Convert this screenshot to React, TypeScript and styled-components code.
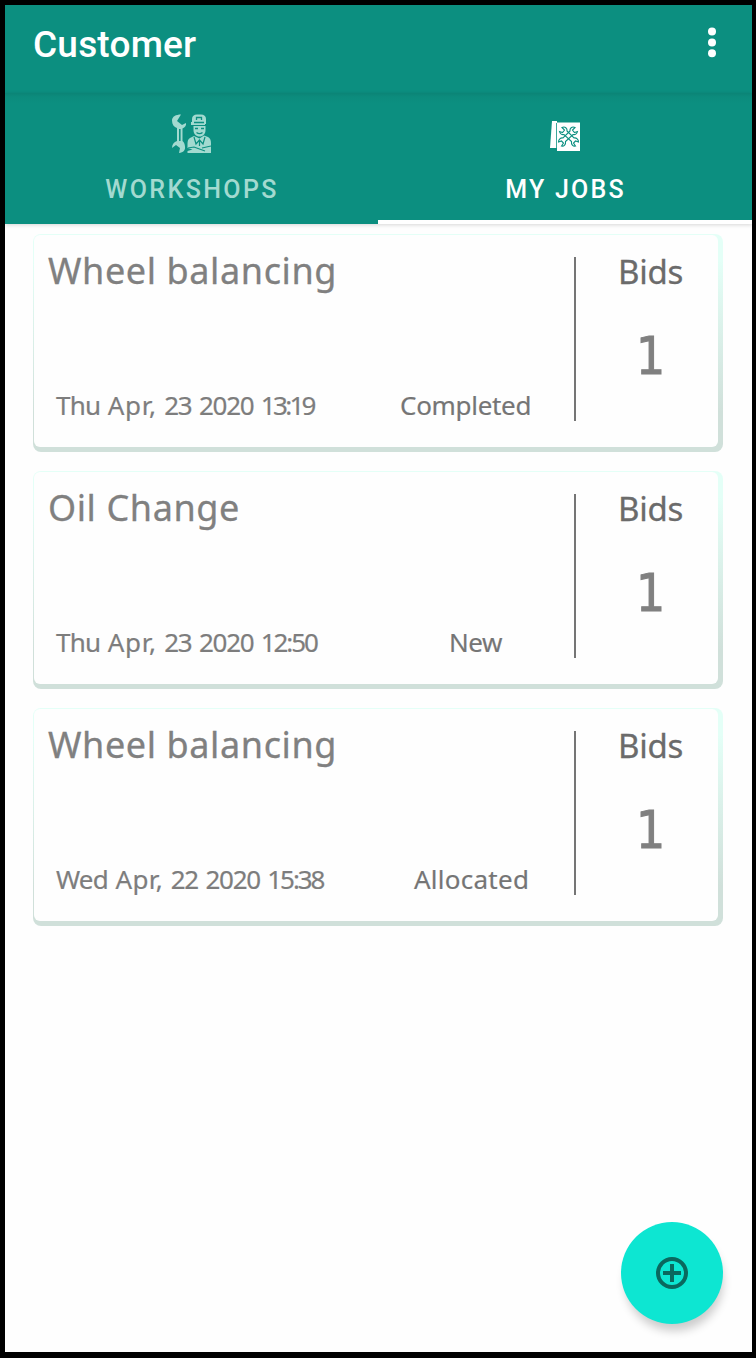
import React from "react";
import styled, { createGlobalStyle } from "styled-components";

const GlobalStyle = createGlobalStyle`
  *, *::before, *::after { box-sizing: border-box; }
  body { margin: 0; background: #000; }
`;

const Screen = styled.div`
  position: relative;
  display: flex;
  flex-direction: column;
  width: 756px;
  height: 1358px;
  border: solid #000;
  border-width: 5px 4px 6px 5px;
  background: #fefefe;
  font-family: "Noto Sans", sans-serif;
  overflow: hidden;
`;

const AppBar = styled.header`
  display: flex;
  flex: none;
  align-items: center;
  justify-content: space-between;
  height: 88px;
  padding: 0 34px 13px 28px;
  background: #0c8f80;
`;

const Title = styled.h1`
  margin: 4px 0 0;
  font: 500 37px/44px Roboto, sans-serif;
  letter-spacing: 0.2px;
  color: #fff;
`;

const MenuButton = styled.button`
  display: flex;
  padding: 0;
  border: 0;
  background: none;
`;

const Tabs = styled.nav`
  display: grid;
  grid-template-columns: 373px 374px;
  flex: none;
  height: 131px;
  background: linear-gradient(#0b8476, #0c8c7d 4px, #0c8f80 11px);
  box-shadow: 0 1px 4px rgba(0, 0, 0, 0.16);
`;

const Tab = styled.div<{ $active?: boolean }>`
  display: flex;
  flex-direction: column;
  align-items: center;
  padding-top: 19px;
  border-bottom: 4px solid ${(p) => (p.$active ? "#fff" : "transparent")};
  color: ${(p) => (p.$active ? "#fff" : "#a3dad0")};
`;

const TabLabel = styled.span<{ $spacing: number }>`
  margin-top: 21px;
  font: 500 25px/30px Roboto, sans-serif;
  letter-spacing: ${(p) => p.$spacing}px;
  margin-right: -${(p) => p.$spacing / 2}px;
`;

const JobList = styled.main`
  display: flex;
  flex-direction: column;
  gap: 19px;
  padding: 10px 29px 0 28px;
`;

const Card = styled.article`
  height: 218px;
  padding: 1px 5px 5px 1px;
  border-radius: 8px;
  background: linear-gradient(#e4fff7 12%, #d0e0da 82%);
`;

const CardFace = styled.div`
  display: flex;
  height: 100%;
  padding-top: 22px;
  border-radius: 6px;
  background: #fefefe;
`;

const JobInfo = styled.div`
  display: flex;
  flex-direction: column;
  justify-content: space-between;
  width: 540px;
  height: 164px;
`;

const JobName = styled.h2<{ $spacing: number }>`
  margin: -10px 0 0 14px;
  font-size: 36px;
  line-height: 48px;
  font-weight: 400;
  letter-spacing: ${(p) => p.$spacing}px;
  -webkit-text-stroke: 0.3px #808080;
  color: #808080;
`;

const JobMeta = styled.div`
  display: grid;
  grid-template-columns: 318px 200px;
  align-items: center;
  height: 32px;
  padding-left: 22px;
  font-size: 26px;
  line-height: 32px;
  -webkit-text-stroke: 0.2px #7d7d7d;
  color: #7d7d7d;
`;

const DateLine = styled.time`
  display: flex;
  gap: 7.5px;
  white-space: nowrap;
`;

const DatePart = styled.span<{ $spacing: number }>`
  letter-spacing: ${(p) => p.$spacing}px;
`;

const Status = styled.span<{ $shift: number; $spacing: number }>`
  padding-left: ${(p) => p.$shift}px;
  letter-spacing: ${(p) => p.$spacing}px;
  color: #757575;
`;

const Divider = styled.div`
  width: 2px;
  height: 164px;
  background: #757575;
`;

const Bids = styled.div`
  display: flex;
  flex-direction: column;
  align-items: center;
  width: 142px;
  padding-left: 7px;
`;

const BidsLabel = styled.span`
  margin-top: -6px;
  font-size: 33px;
  line-height: 42px;
  letter-spacing: -0.3px;
  -webkit-text-stroke: 0.3px #6b6b6b;
  color: #6b6b6b;
`;

const BidCount = styled.span`
  margin-top: 34px;
  font: 51px/60px "DejaVu Sans Condensed", "DejaVu Sans", sans-serif;
  -webkit-text-stroke: 1px #808080;
  color: #808080;
`;

const AddButton = styled.button`
  position: absolute;
  right: 29px;
  bottom: 28px;
  display: grid;
  place-items: center;
  width: 102px;
  height: 102px;
  padding: 0;
  border: 0;
  border-radius: 50%;
  background: #0de6d2;
  box-shadow: 2px 9px 10px -2px rgba(0, 0, 0, 0.2);
`;

const MechanicIcon = () => (
  <svg width="42" height="42" viewBox="0 0 42 42" fill="currentColor">
    <path d="M10 2.500C5 2.500 1 4.500 1 8.500s2 6.500 5 7.500V29C3 30 1 32.500 1 36l4-3 4 3-1 5c4.500-.5 6.500-3 6-6.500-.2-2.500-1-4.500-2.500-5.500V16.500c2.500-1 4-3 3.500-5.500l-4 2-5-4z" />
    <path d="M8.800 17v12" stroke="#0c8f80" strokeWidth="1.600" />
    <path d="M21 10V7c0-3 2-4.500 5-4.500h4c3 0 5 1.500 5 4.500v5h-1v1H20v-3z" />
    <path d="M25.500 8V5.500h5V8M23 10.500h10" fill="none" stroke="#0c8f80" strokeWidth="1.300" />
    <path d="M22.500 14h12v4c0 4-2.500 6.500-6 6.500s-6-2.500-6-6.500z" />
    <path d="M24 16.500h3M30 16.500h3M25.500 20.500c2 1.500 4 1.500 6 0" fill="none" stroke="#0c8f80" strokeWidth="1.400" />
    <path d="M23 24l-4 2c-2 1-2.500 3-2.500 6v4l5 1.500-5 1.500v2H40v-10c0-3-1-5-3-6l-4-1.500-4.500 3z" />
    <path d="M23 25l2 7 3.500-4 3.500 4 2-7M28.500 28v6M17 36l6-1 11 4M31 36l9-2" fill="none" stroke="#0c8f80" strokeWidth="1.200" />
  </svg>
);

const JobsIcon = () => (
  <svg width="42" height="42" viewBox="0 1 42 42" fill="currentColor">
    <path d="M8 10h5v27H6z" />
    <path d="M13 11.500h23V40H13z" />
    <path d="M12.500 12v25" stroke="#0c8f80" strokeWidth=".8" />
    <g fill="none" stroke="#0c8f80" strokeWidth="1.100">
      <path d="M18 16.500l2.500 2.500-2 2.500-3-1c.5 2.500 2.500 3.500 4.500 3l7.500 7c-.5 3 1.500 5 4 4.500l-2-3 2-2 3 1c0-2.500-2-4.500-4.500-4l-7-7c.500-2.500-2-5-5-3.500z" />
      <path d="M31 16.500L28.500 19l2 2.500 3-1c-.5 2.500-2.500 3.500-4.500 3l-7.500 7c.500 3-1.500 5-4 4.500l2-3-2-2-3 1c0-2.500 2-4.500 4.500-4l7-7c-.5-2.500 2-5 5-3.500z" />
    </g>
  </svg>
);

type Job = {
  name: string;
  nameSpacing: number;
  date: [string, number][];
  status: string;
  statusShift: number;
  statusSpacing: number;
};

const jobs: Job[] = [
  {
    name: "Wheel balancing",
    nameSpacing: 0.6,
    date: [["Thu", -0.8], ["Apr,", 0.7], ["23", -1.2], ["2020", -1.3], ["13:19", -2.7]],
    status: "Completed",
    statusShift: 26,
    statusSpacing: -0.3,
  },
  {
    name: "Oil Change",
    nameSpacing: 0.6,
    date: [["Thu", -0.8], ["Apr,", 0.7], ["23", -1.2], ["2020", -1.3], ["12:50", -2.1]],
    status: "New",
    statusShift: 75,
    statusSpacing: -0.5,
  },
  {
    name: "Wheel balancing",
    nameSpacing: 0.6,
    date: [["Wed", -0.8], ["Apr,", 0.4], ["22", -1.2], ["2020", -1.3], ["15:38", -2.1]],
    status: "Allocated",
    statusShift: 40,
    statusSpacing: 0.25,
  },
];

export default function App() {
  return (
    <Screen>
      <GlobalStyle />
      <AppBar>
        <Title>Customer</Title>
        <MenuButton aria-label="More options">
          <svg width="12" height="32" viewBox="0 0 12 32" fill="#fff">
            <circle cx="6" cy="4.500" r="4" />
            <circle cx="6" cy="15.400" r="4" />
            <circle cx="6" cy="26.300" r="4" />
          </svg>
        </MenuButton>
      </AppBar>
      <Tabs>
        <Tab>
          <MechanicIcon />
          <TabLabel $spacing={2.4}>WORKSHOPS</TabLabel>
        </Tab>
        <Tab $active>
          <JobsIcon />
          <TabLabel $spacing={2.2}>MY JOBS</TabLabel>
        </Tab>
      </Tabs>
      <JobList>
        {jobs.map((job, i) => (
          <Card key={i}>
            <CardFace>
              <JobInfo>
                <JobName $spacing={job.nameSpacing}>{job.name}</JobName>
                <JobMeta>
                  <DateLine>
                    {job.date.map(([text, spacing], k) => (
                      <DatePart key={k} $spacing={spacing}>{text}</DatePart>
                    ))}
                  </DateLine>
                  <Status $shift={job.statusShift} $spacing={job.statusSpacing}>
                    {job.status}
                  </Status>
                </JobMeta>
              </JobInfo>
              <Divider />
              <Bids>
                <BidsLabel>Bids</BidsLabel>
                <BidCount>1</BidCount>
              </Bids>
            </CardFace>
          </Card>
        ))}
      </JobList>
      <AddButton aria-label="Add job">
        <svg width="34" height="34" viewBox="0 0 34 34" fill="none" stroke="#0a685e" strokeWidth="4">
          <circle cx="17" cy="17" r="14" />
          <path d="M8 17h18M17 8v18" />
        </svg>
      </AddButton>
    </Screen>
  );
}
